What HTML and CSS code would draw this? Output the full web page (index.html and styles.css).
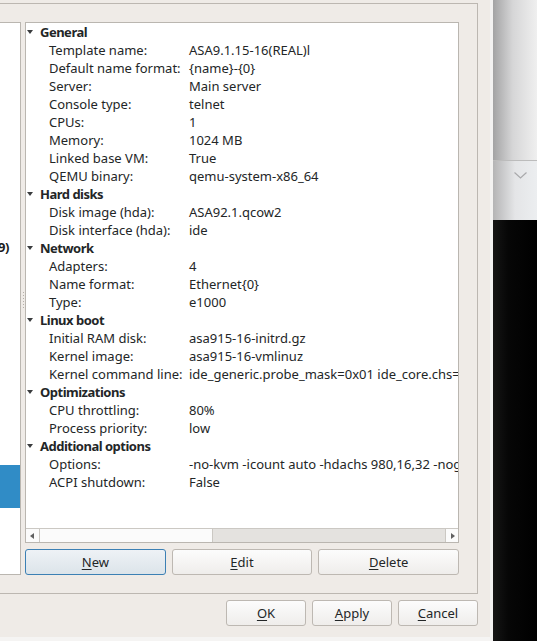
FILE: index.html
```html
<!DOCTYPE html>
<html>
<head>
<meta charset="utf-8">
<link rel="stylesheet" href="styles.css">
</head>
<body>
<div class="screen">
  <div class="dialog">
    <div class="frame">
      <div class="leftpanel">
        <div class="lp-item">9)</div>
        <div class="lp-selected"></div>
      </div>
      <div class="splitter"><div class="handle"></div></div>
      <div class="treecol">
        <div class="tree">
          <div class="rows">
            <div class="row head"><span class="exp"></span>General</div>
            <div class="row"><span class="label">Template name:</span><span class="val">ASA9.1.15-16(REAL)l</span></div>
            <div class="row"><span class="label">Default name format:</span><span class="val">{name}-{0}</span></div>
            <div class="row"><span class="label">Server:</span><span class="val">Main server</span></div>
            <div class="row"><span class="label">Console type:</span><span class="val">telnet</span></div>
            <div class="row"><span class="label">CPUs:</span><span class="val">1</span></div>
            <div class="row"><span class="label">Memory:</span><span class="val">1024 MB</span></div>
            <div class="row"><span class="label">Linked base VM:</span><span class="val">True</span></div>
            <div class="row"><span class="label">QEMU binary:</span><span class="val">qemu-system-x86_64</span></div>
            <div class="row head"><span class="exp"></span>Hard disks</div>
            <div class="row"><span class="label">Disk image (hda):</span><span class="val">ASA92.1.qcow2</span></div>
            <div class="row"><span class="label">Disk interface (hda):</span><span class="val">ide</span></div>
            <div class="row head"><span class="exp"></span>Network</div>
            <div class="row"><span class="label">Adapters:</span><span class="val">4</span></div>
            <div class="row"><span class="label">Name format:</span><span class="val">Ethernet{0}</span></div>
            <div class="row"><span class="label">Type:</span><span class="val">e1000</span></div>
            <div class="row head"><span class="exp"></span>Linux boot</div>
            <div class="row"><span class="label">Initial RAM disk:</span><span class="val">asa915-16-initrd.gz</span></div>
            <div class="row"><span class="label">Kernel image:</span><span class="val">asa915-16-vmlinuz</span></div>
            <div class="row"><span class="label">Kernel command line:</span><span class="val">ide_generic.probe_mask=0x01 ide_core.chs=0.0:980,16,32 auto nousb console=ttyS0,9600</span></div>
            <div class="row head"><span class="exp"></span>Optimizations</div>
            <div class="row"><span class="label">CPU throttling:</span><span class="val">80%</span></div>
            <div class="row"><span class="label">Process priority:</span><span class="val">low</span></div>
            <div class="row head"><span class="exp"></span>Additional options</div>
            <div class="row"><span class="label">Options:</span><span class="val">-no-kvm -icount auto -hdachs 980,16,32 -nographic</span></div>
            <div class="row"><span class="label">ACPI shutdown:</span><span class="val">False</span></div>
          </div>
          <div class="hscroll">
            <div class="sarrow left"><span class="tri-left"></span></div>
            <div class="thumb"></div>
            <div class="track"></div>
            <div class="sarrow right"><span class="tri-right"></span></div>
          </div>
        </div>
        <div class="treebtns">
          <div class="btn default"><span><u>N</u>ew</span></div>
          <div class="btn"><span><u>E</u>dit</span></div>
          <div class="btn"><span><u>D</u>elete</span></div>
        </div>
      </div>
    </div>
    <div class="dlgbtns">
      <div class="btn small"><span><u>O</u>K</span></div>
      <div class="btn small"><span><u>A</u>pply</span></div>
      <div class="btn small"><span><u>C</u>ancel</span></div>
    </div>
    <div class="band"></div>
  </div>
  <div class="edge"></div>
  <div class="other">
    <div class="o-top"></div>
    <div class="o-mid">
      <svg class="chev" width="13" height="7" viewBox="0 0 13 7"><path d="M0.5 0.5 L6.5 6 L12.5 0.5" fill="none" stroke="#a9a9ab" stroke-width="1.2"/></svg>
    </div>
    <div class="o-black"></div>
  </div>
</div>
</body>
</html>
```

FILE: styles.css
```css
html, body {
  margin: 0;
  padding: 0;
}
body {
  font-family: "Noto Sans", "DejaVu Sans", sans-serif;
  font-size: 13px;
  color: #232627;
}
.screen {
  display: flex;
  width: 537px;
  height: 641px;
  overflow: hidden;
}
.dialog {
  width: 490px;
  flex: none;
  background: #efebe7;
  display: flex;
  flex-direction: column;
  padding-top: 3px;
  box-sizing: border-box;
}
.frame {
  width: 478px;
  box-sizing: border-box;
  border-top: 1px solid #bcb7b1;
  border-right: 1px solid #bcb7b1;
  border-bottom: 1px solid #bcb7b1;
  padding: 18px 18px 18px 0;
  display: flex;
  align-items: flex-start;
}
.leftpanel {
  width: 21px;
  height: 553px;
  box-sizing: border-box;
  background: #fff;
  border-top: 1px solid #bab6b0;
  border-right: 1px solid #bab6b0;
  border-bottom: 1px solid #bab6b0;
  flex: none;
  overflow: hidden;
}
.lp-item {
  margin-top: 215px;
  height: 18px;
  line-height: 18px;
  font-weight: bold;
  letter-spacing: -0.5px;
  margin-left: -2px;
  white-space: nowrap;
  color: #1c1c1c;
}
.lp-selected {
  margin-top: 209px;
  height: 43px;
  background: #308cc6;
}
.splitter {
  width: 4px;
  height: 553px;
  flex: none;
  display: flex;
  align-items: center;
}
.handle {
  width: 1px;
  height: 17px;
  margin-left: 2px;
  margin-top: 4px;
  background: repeating-linear-gradient(to bottom, #b3aea8 0 1px, transparent 1px 3px);
}
.treecol {
  width: 434px;
  flex: none;
  display: flex;
  flex-direction: column;
}
.tree {
  height: 521px;
  box-sizing: border-box;
  border: 1px solid #bab6b0;
  background: #fff;
  display: flex;
  flex-direction: column;
}
.rows {
  flex: 1;
  overflow: hidden;
}
.row {
  height: 18px;
  display: flex;
  align-items: center;
  white-space: nowrap;
  padding-left: 23px;
}
.row.head {
  padding-left: 0;
  font-weight: bold;
  letter-spacing: -0.5px;
}
.exp {
  width: 14px;
  height: 18px;
  flex: none;
  position: relative;
}
.exp::after {
  content: "";
  position: absolute;
  left: 1px;
  top: 7px;
  width: 0;
  height: 0;
  border-left: 3.5px solid transparent;
  border-right: 3.5px solid transparent;
  border-top: 4px solid #3a3c3e;
}
.label {
  width: 140px;
  flex: none;
}
.val {
  flex: none;
}
.hscroll {
  height: 14px;
  box-sizing: border-box;
  border-top: 1px solid #cbc8c3;
  display: flex;
  flex: none;
}
.sarrow {
  width: 13px;
  flex: none;
  background: #fbfbfb;
  display: flex;
  align-items: center;
  justify-content: center;
  box-sizing: border-box;
}
.sarrow.right {
  border-left: 1px solid #cbc8c3;
}
.tri-left {
  width: 0;
  height: 0;
  border-top: 3.5px solid transparent;
  border-bottom: 3.5px solid transparent;
  border-right: 4px solid #606060;
  margin-left: -2px;
}
.tri-right {
  width: 0;
  height: 0;
  border-top: 3.5px solid transparent;
  border-bottom: 3.5px solid transparent;
  border-left: 4px solid #606060;
  margin-left: 1px;
}
.thumb {
  width: 174px;
  flex: none;
  box-sizing: border-box;
  border-left: 1px solid #cbc8c3;
  border-right: 1px solid #cbc8c3;
  background: #fbfbfb;
}
.track {
  flex: 1;
  background: #e4e2df;
}
.treebtns {
  margin-top: 6px;
  display: flex;
  gap: 6px;
}
.btn {
  height: 26px;
  box-sizing: border-box;
  border: 1px solid #bdb8b2;
  border-radius: 3px;
  background: linear-gradient(#fcfcfc, #efedeb);
  display: flex;
  align-items: center;
  justify-content: center;
  flex: 1;
  color: #232627;
}
.btn.default {
  border-color: #3c80b4;
  background: linear-gradient(#eef2f6, #dce4ea);
}
.btn u {
  text-underline-offset: 2px;
}
.dlgbtns {
  margin-top: 6px;
  width: 478px;
  display: flex;
  justify-content: flex-end;
  gap: 6px;
}
.btn.small {
  width: 80px;
  flex: none;
}
.band {
  margin-top: auto;
  height: 4px;
  background: #f5f4f3;
}
.edge {
  width: 3px;
  flex: none;
  background: #f3f2f1;
}
.other {
  width: 44px;
  flex: none;
  display: flex;
  flex-direction: column;
}
.o-top {
  height: 160px;
  background: linear-gradient(to right, #a3a3a4, #d6d6d7 45%, #efefef);
  border-bottom: 1px solid #bcbcbc;
}
.o-mid {
  height: 59px;
  background: linear-gradient(to right, #b4b4b5, #e4e5e7 50%, #eceef0);
  position: relative;
}
.chev {
  position: absolute;
  left: 21px;
  top: 11px;
}
.o-black {
  flex: 1;
  background: linear-gradient(to right, #151515, #060606 35%, #000);
}
```
